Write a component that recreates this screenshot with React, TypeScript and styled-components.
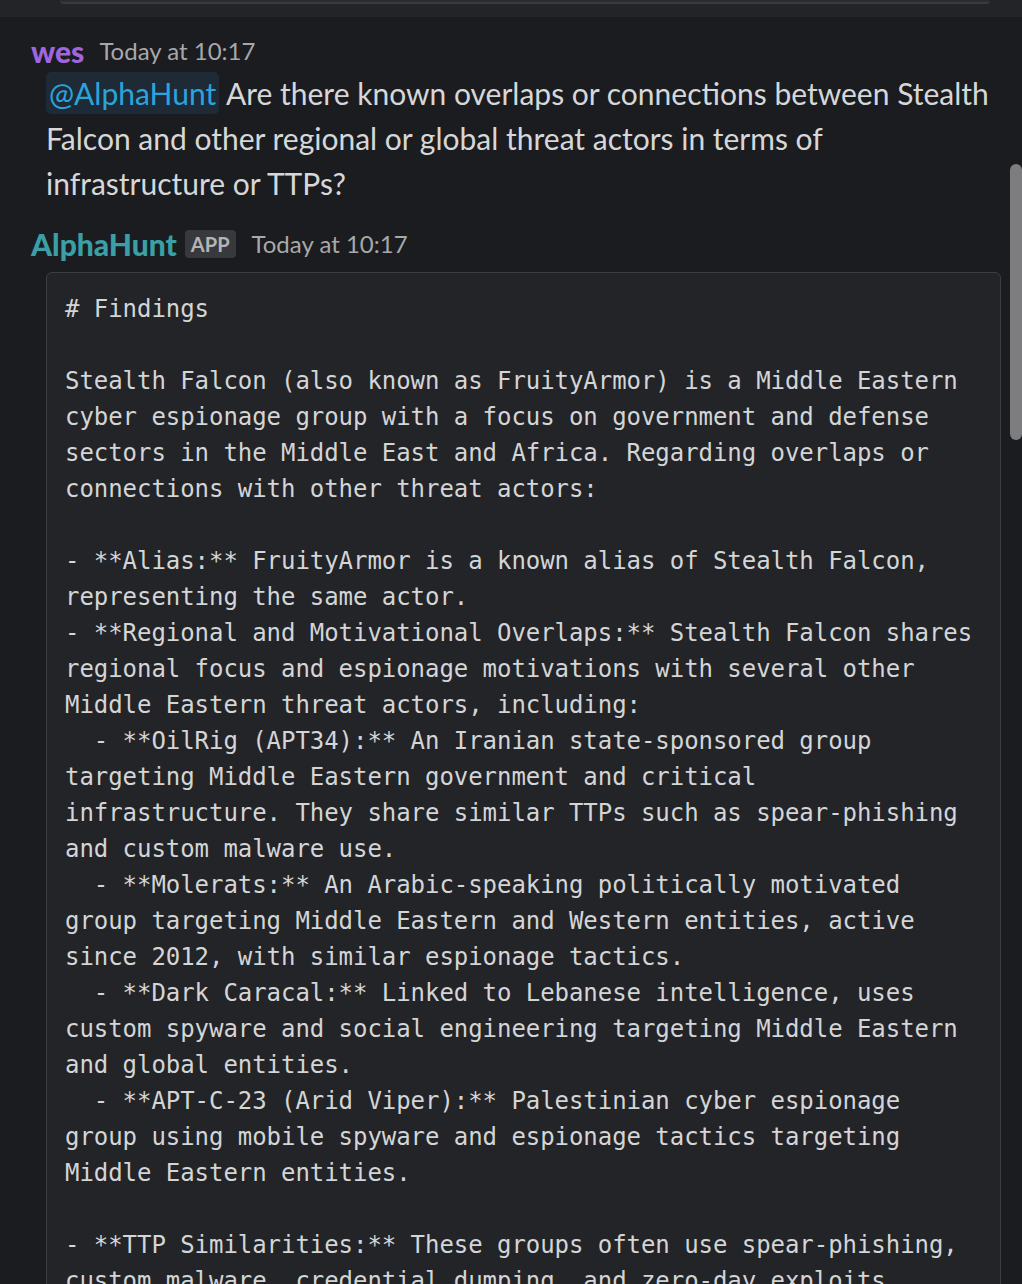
import styled, { createGlobalStyle } from "styled-components"

const GlobalStyle = createGlobalStyle`
    html, body {
        margin: 0;
        padding: 0;
        background: #1b1c1f;
        overflow: hidden;
    }
    body {
        font-family: Lato, "Noto Sans", sans-serif;
        color: #d1d2d3;
    }
`;

const codeLines = [
    "# Findings",
    "",
    "Stealth Falcon (also known as FruityArmor) is a Middle Eastern",
    "cyber espionage group with a focus on government and defense",
    "sectors in the Middle East and Africa. Regarding overlaps or",
    "connections with other threat actors:",
    "",
    "- **Alias:** FruityArmor is a known alias of Stealth Falcon,",
    "representing the same actor.",
    "- **Regional and Motivational Overlaps:** Stealth Falcon shares",
    "regional focus and espionage motivations with several other",
    "Middle Eastern threat actors, including:",
    "  - **OilRig (APT34):** An Iranian state-sponsored group",
    "targeting Middle Eastern government and critical",
    "infrastructure. They share similar TTPs such as spear-phishing",
    "and custom malware use.",
    "  - **Molerats:** An Arabic-speaking politically motivated",
    "group targeting Middle Eastern and Western entities, active",
    "since 2012, with similar espionage tactics.",
    "  - **Dark Caracal:** Linked to Lebanese intelligence, uses",
    "custom spyware and social engineering targeting Middle Eastern",
    "and global entities.",
    "  - **APT-C-23 (Arid Viper):** Palestinian cyber espionage",
    "group using mobile spyware and espionage tactics targeting",
    "Middle Eastern entities.",
    "",
    "- **TTP Similarities:** These groups often use spear-phishing,",
    "custom malware, credential dumping, and zero-day exploits",
    "to target government, defense, and critical sectors.",
];

export default function App() {
    return (
        <>
            <GlobalStyle />
            <Screen>
                <TopBand>
                    <PrevCard />
                </TopBand>

                <Message>
                    <Header>
                        <Name color="#a066e0">wes</Name>
                        <Time>Today at 10:17</Time>
                    </Header>
                    <Body>
                        <Mention>@AlphaHunt</Mention> Are there known overlaps or connections between Stealth
                        Falcon and other regional or global threat actors in terms of infrastructure or TTPs?
                    </Body>
                </Message>

                <Message>
                    <Header>
                        <Name color="#3a9fa6">AlphaHunt</Name>
                        <AppBadge>APP</AppBadge>
                        <Time>Today at 10:17</Time>
                    </Header>
                    <CodeBlock>
                        {codeLines.map((line, i) => (
                            <CodeLine key={i}>{line || " "}</CodeLine>
                        ))}
                    </CodeBlock>
                </Message>

                <Scrollbar />
            </Screen>
        </>
    )
}


// Layout
const Screen = styled.div`
    position: relative;
    width: 1022px;
    height: 1284px;
    overflow: hidden;
    background: #1b1c1f;
`;

const TopBand = styled.div`
    height: 17px;
    background: #232428;
    padding: 0 32px 0 60px;
`;

const PrevCard = styled.div`
    height: 2px;
    background: #2b2c30;
    border-bottom: 2px solid #3a3b3f;
    border-radius: 0 0 10px 10px;
`;

const Message = styled.div`
    padding: 14px 21px 0 31px;

    & + & {
        padding-top: 18px;
    }
`;

const Header = styled.div`
    display: flex;
    align-items: center;
    height: 40px;
`;

const Name = styled.span<{ color: string }>`
    font-size: 30px;
    font-weight: 900;
    color: ${p => p.color};
    margin-right: 15px;
    line-height: 40px;
`;

const AppBadge = styled.span`
    font-size: 20px;
    font-weight: 700;
    color: #b4b4b7;
    background: #38393d;
    border-radius: 4px;
    padding: 0 6px;
    height: 28px;
    line-height: 28px;
    margin-right: 16px;
    margin-left: -7px;
`;

const Time = styled.span`
    font-size: 24px;
    color: #a8a8ab;
    line-height: 40px;
`;

const Body = styled.div`
    margin-left: 15px;
    font-size: 30px;
    line-height: 45px;
    color: #d6d7d8;
`;

const Mention = styled.span`
    display: inline-block;
    color: #2aa4dc;
    background: #1e2a36;
    border-radius: 5px;
    padding: 0 3px;
    line-height: 42px;
`;

const CodeBlock = styled.div`
    margin: 8px 0 0 15px;
    padding: 18px 18px 17px;
    background: #232428;
    border: 1px solid #3d3e42;
    border-radius: 6px;
`;

const CodeLine = styled.div`
    font-family: "DejaVu Sans Mono", "Liberation Mono", monospace;
    font-size: 24px;
    line-height: 36px;
    letter-spacing: -0.05px;
    white-space: pre;
    color: #d4d5d6;
`;

const Scrollbar = styled.div`
    position: absolute;
    top: 164px;
    right: 0;
    width: 12px;
    height: 276px;
    border-radius: 6px;
    background: #7d7d80;
`;
